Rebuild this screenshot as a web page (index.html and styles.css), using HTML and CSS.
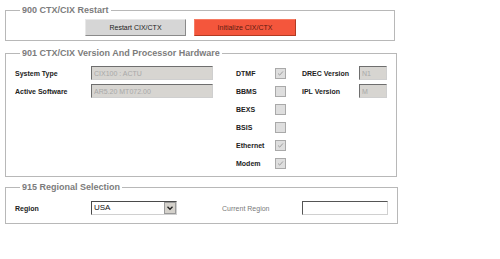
FILE: index.html
```html
<!DOCTYPE html>
<html lang="en">
<head>
    <meta charset="UTF-8">
    <title>CTX/CIX Settings</title>
    <link rel="stylesheet" href="styles.css">
</head>
<body>
    <div class="page">
        <fieldset class="panel restart">
            <legend>900 CTX/CIX Restart</legend>
            <div class="btn-row">
                <button class="btn">Restart CIX/CTX</button>
                <button class="btn btn-danger">Initialize CIX/CTX</button>
            </div>
        </fieldset>

        <fieldset class="panel hardware">
            <legend>901 CTX/CIX Version And Processor Hardware</legend>
            <div class="hw-grid">
                <label>System Type</label>
                <div><input class="field wide" type="text" value="CIX100 : ACTU" disabled></div>
                <label>DTMF</label>
                <span class="check checked"><svg viewBox="0 0 11 11"><path d="M2.5 5.5 L4.5 7.5 L8.5 3"/></svg></span>
                <label>DREC Version</label>
                <div><input class="field small" type="text" value="N1" disabled></div>

                <label>Active Software</label>
                <div><input class="field wide" type="text" value="AR5.20 MT072.00" disabled></div>
                <label>BBMS</label>
                <span class="check"></span>
                <label>IPL Version</label>
                <div><input class="field small" type="text" value="M" disabled></div>

                <label class="col3">BEXS</label>
                <span class="check"></span>
                <label class="col3">BSIS</label>
                <span class="check"></span>
                <label class="col3">Ethernet</label>
                <span class="check checked"><svg viewBox="0 0 11 11"><path d="M2.5 5.5 L4.5 7.5 L8.5 3"/></svg></span>
                <label class="col3">Modem</label>
                <span class="check checked"><svg viewBox="0 0 11 11"><path d="M2.5 5.5 L4.5 7.5 L8.5 3"/></svg></span>
            </div>
        </fieldset>

        <fieldset class="panel region">
            <legend>915 Regional Selection</legend>
            <div class="region-row">
                <label for="region">Region</label>
                <div class="select-wrap">
                    <select id="region">
                        <option>USA</option>
                    </select>
                    <span class="select-arrow"><svg viewBox="0 0 12 12"><path d="M3 4.5 L6 7.5 L9 4.5"/></svg></span>
                </div>
                <span class="muted">Current Region</span>
                <input class="field current" type="text" value="">
            </div>
        </fieldset>
    </div>
</body>
</html>
```

FILE: styles.css
```css
* {
    box-sizing: border-box;
  }

  body {
    margin: 0;
    background-color: #fff;
    font-family: "Liberation Sans", Arial, sans-serif;
    color: #222;
  }

  .page {
    padding: 4px 0 0 5px;
  }

  .panel {
    width: 390px;
    margin: 0 0 6px 0;
    padding: 3px 9px 4px 9px;
    border: 1px solid #b8b8b8;
  }

  legend {
    margin-left: 5px;
    padding: 0 2px;
    font-size: 9px;
    line-height: 12px;
    font-weight: bold;
    color: #7c7c7c;
  }

  /* restart buttons */
  .btn-row {
    display: flex;
    gap: 8px;
    padding-left: 70px;
  }

  .btn {
    width: 101px;
    height: 17px;
    padding: 0;
    font-family: inherit;
    font-size: 7px;
    color: #222;
    background-color: #d6d6d6;
    border: 1px solid #e8e8e8;
    border-right-color: #8a8a8a;
    border-bottom-color: #8a8a8a;
  }

  .btn-danger {
    width: 102px;
    color: #5c1b10;
    background-color: #f4563c;
    border-color: #f67a62;
    border-right-color: #b23a22;
    border-bottom-color: #b23a22;
  }

  /* hardware grid */
  .panel.hardware {
    margin-bottom: 4px;
    padding-top: 5px;
    padding-bottom: 4px;
  }

  .hw-grid {
    display: grid;
    grid-template-columns: 76px 145px 39px 27px 57px 28px;
    grid-auto-rows: 18px;
    align-items: center;
  }

  label {
    font-size: 7px;
    font-weight: bold;
    color: #222;
  }

  .col3 {
    grid-column: 3;
  }

  .field {
    display: block;
    height: 14px;
    padding: 0 2px;
    font-family: inherit;
    font-size: 7px;
    color: #a8a8a8;
    background-color: #d7d5d1;
    border: 1px solid #cfcfcf;
    border-top-color: #6e6e6e;
    border-left-color: #6e6e6e;
  }

  .field.wide {
    width: 122px;
  }

  .field.small {
    width: 28px;
  }

  .check {
    display: block;
    width: 11px;
    height: 11px;
    background-color: #dedede;
    border: 1px solid #a9a9a9;
  }

  .check svg {
    display: block;
    width: 9px;
    height: 9px;
  }

  .check path {
    fill: none;
    stroke: #8e8e8e;
    stroke-width: 1;
  }

  /* region row */
  .panel.region {
    padding-top: 6px;
    padding-bottom: 6px;
  }

  .region-row {
    display: grid;
    grid-template-columns: 76px 131px 80px 86px;
    height: 18px;
    align-items: center;
  }

  .select-wrap {
    position: relative;
    width: 86px;
    height: 14px;
  }

  .select-wrap select {
    appearance: none;
    display: block;
    width: 86px;
    height: 14px;
    margin: 0;
    padding: 0 2px;
    line-height: 12px;
    font-family: inherit;
    font-size: 8px;
    color: #111;
    background-color: #fff;
    border: 1px solid #d0d0d0;
    border-top-color: #4a4a4a;
    border-left-color: #4a4a4a;
    border-radius: 0;
  }

  .select-arrow {
    position: absolute;
    top: 1px;
    right: 1px;
    width: 12px;
    height: 12px;
    background-color: #d4d1cb;
    border: 1px solid #9a9a9a;
  }

  .select-arrow svg {
    display: block;
    width: 10px;
    height: 10px;
  }

  .select-arrow path {
    fill: none;
    stroke: #222;
    stroke-width: 1.6;
  }

  .muted {
    font-size: 7px;
    color: #7a7a7a;
  }

  .field.current {
    width: 86px;
    color: #222;
    background-color: #fff;
    border-color: #d0d0d0;
    border-top-color: #555;
    border-left-color: #555;
  }
```
